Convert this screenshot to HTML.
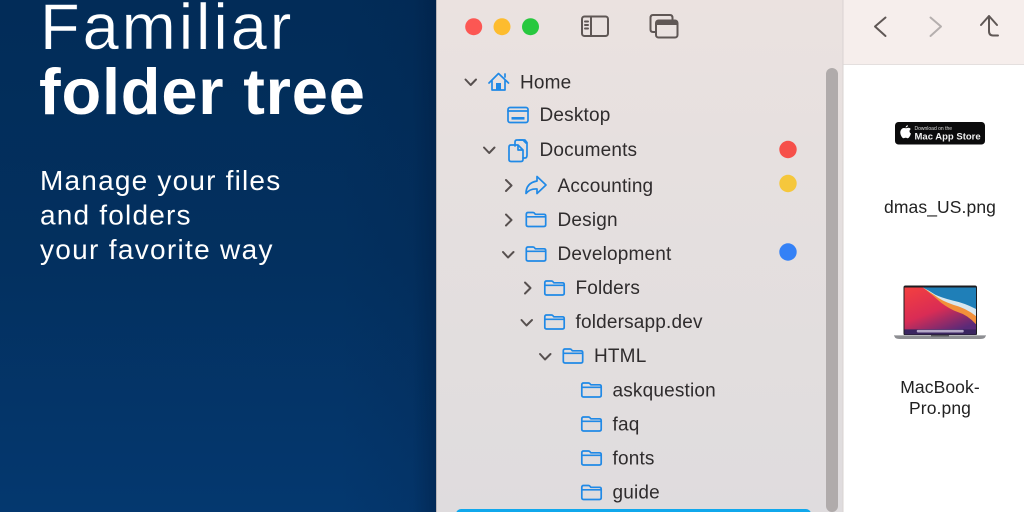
<!DOCTYPE html>
<html><head><meta charset="utf-8"><style>
html,body{margin:0;padding:0;width:1024px;height:512px;overflow:hidden;background:#fff}
svg{display:block}
text{font-family:"Liberation Sans",sans-serif}
.t{font-size:19px;fill:#2f2c2d;letter-spacing:.18px}
.ch{fill:none;stroke:#57504f;stroke-width:2;stroke-linecap:round;stroke-linejoin:round}
.ic{fill:none;stroke:#2089e6;stroke-width:1.7;stroke-linejoin:round;stroke-linecap:round}
.tb{fill:none;stroke:#5f5755;stroke-width:2;stroke-linejoin:round;stroke-linecap:round}
</style></head><body>
<svg width="1024" height="512" viewBox="0 0 1024 512" xmlns="http://www.w3.org/2000/svg">
<defs>
<linearGradient id="bg" x1="0" y1="0" x2="0" y2="1"><stop offset="0" stop-color="#022c58"/><stop offset=".5" stop-color="#03305f"/><stop offset="1" stop-color="#04386f"/></linearGradient>
<linearGradient id="shade" x1="0" y1="0" x2="1" y2="0"><stop offset="0" stop-color="#001c40" stop-opacity="0"/><stop offset=".75" stop-color="#001c40" stop-opacity=".12"/><stop offset="1" stop-color="#001c40" stop-opacity=".5"/></linearGradient>
<linearGradient id="side" x1="0" y1="0" x2="0" y2="1"><stop offset="0" stop-color="#ebe2e0"/><stop offset=".3" stop-color="#e6e0df"/><stop offset="1" stop-color="#dfdcde"/></linearGradient>
<linearGradient id="scr" x1="0" y1="0" x2=".6" y2="1"><stop offset="0" stop-color="#f4403f"/><stop offset=".55" stop-color="#d92c55"/><stop offset="1" stop-color="#5a2a78"/></linearGradient>
<symbol id="f" viewBox="0 0 21 16" overflow="visible"><path class="ic" d="M2.500 1H7.500Q8.600 1 9.200 2L9.800 2.800H18.500Q20.200 2.800 20.200 4.500V13.300Q20.200 15 18.500 15H2.500Q.8 15 .8 13.300V2.700Q.8 1 2.500 1ZM.8 5.300H20.200"/></symbol>
</defs>

<rect width="437" height="512" fill="url(#bg)"/>
<rect x="340" width="97" height="512" fill="url(#shade)"/>
<text x="40" y="49" font-size="65" letter-spacing="2.900" fill="#fff" stroke="#03305f" stroke-width=".5">Familiar</text>
<text x="39" y="114" font-size="65" font-weight="700" letter-spacing=".8" fill="#fff">folder tree</text>
<text x="40" y="190" font-size="28" letter-spacing="1.200" fill="#fff">Manage your files</text>
<text x="40" y="224.500" font-size="28" letter-spacing="1.200" fill="#fff">and folders</text>
<text x="40" y="259" font-size="28" letter-spacing="1.300" fill="#fff">your favorite way</text>

<rect x="436" width="408" height="512" fill="url(#side)"/>
<rect x="436" width="1" height="512" fill="#b9b6b8"/>
<rect x="843" width="181" height="64" fill="#f6eeec"/>
<rect x="843" y="64" width="181" height="1" fill="#e4dfde"/>
<rect x="843" y="65" width="181" height="447" fill="#fff"/>
<rect x="842.500" width="1" height="512" fill="#d9d3d2"/>

<circle cx="473.700" cy="26.700" r="8.500" fill="#fc5753"/>
<circle cx="502" cy="26.700" r="8.500" fill="#fdbc2e"/>
<circle cx="530.500" cy="26.700" r="8.500" fill="#28c83f"/>

<rect x="582" y="16.500" width="26" height="19.500" rx="2.500" class="tb"/>
<path class="tb" d="M591 16.500V36M585 21.500H588M585 25H588M585 28.500H588" stroke-width="1.600"/>
<path class="tb" d="M655 32H653Q650.500 32 650.500 29.500V18Q650.500 15 653 15H670Q672.500 15 672.500 18V20"/>
<rect x="656" y="20.500" width="21.500" height="17" rx="2.500" class="tb"/>
<rect x="656" y="20.500" width="21.500" height="4.500" fill="#5f5755"/>

<path class="tb" d="M885.500 17.500L875 26.500L885.500 36"/>
<path class="tb" d="M930.500 17.500L941 26.500L930.500 36" style="stroke:#b5afae"/>
<path class="tb" d="M981 25L989 16L997 25M989 16V31Q989 35.500 993 35.500H998"/>

<rect x="826" y="68" width="12" height="444" rx="6" fill="#b0abab"/>
<rect x="456" y="509" width="355" height="10" rx="5" fill="#10a8ec"/>

<circle cx="788" cy="149.500" r="8.700" fill="#f6504a"/>
<circle cx="788" cy="183.500" r="8.700" fill="#f5c73c"/>
<circle cx="788" cy="252" r="8.700" fill="#3481f6"/>

<path class="ch" d="M465.500 79.500L470.700 85L476 79.500"/>
<path class="ch" d="M484 147.500L489.200 153L494.500 147.500"/>
<path class="ch" d="M506 180L511.500 185.500L506 191"/>
<path class="ch" d="M506 214.500L511.500 220L506 225.500"/>
<path class="ch" d="M503 252L508 257.500L513.500 252"/>
<path class="ch" d="M525 282.500L530.500 288L525 293.500"/>
<path class="ch" d="M521.500 320L526.500 325.500L532 320"/>
<path class="ch" d="M540 354L545 359.500L550.500 354"/>

<path class="ic" d="M489 83L498.500 73.500L508.500 83M492 80.500V90H505V80.500"/>
<rect x="496" y="83" width="5" height="7" fill="#2089e6"/>
<path class="ic" d="M505 74V77"/>

<rect x="508" y="107.500" width="20" height="15" rx="2" class="ic"/>
<path class="ic" d="M508 111H528"/>
<rect x="511.500" y="117" width="13" height="2.600" fill="#2089e6"/>

<path class="ic" d="M515 146V142Q515 140 517 140H523L526 143"/>
<path class="ic" d="M519 140H525L527 142.500L527 155Q527 158 525 158H523"/>
<path class="ic" d="M511 145H518L523 150V159.500Q523 161.500 521 161.500H511Q509 161.500 509 159.500V147Q509 145 511 145ZM518 145V150H523"/>

<path class="ic" d="M526 193.500Q526 183 537 181V176.500L546 185L537 193.500V189Q530 188.500 526 193.500Z"/>

<use href="#f" x="525.500" y="211.500" width="21" height="16"/>
<use href="#f" x="525.500" y="246" width="21" height="16"/>
<use href="#f" x="544" y="280" width="21" height="16"/>
<use href="#f" x="544" y="314" width="21" height="16"/>
<use href="#f" x="562.500" y="348" width="21" height="16"/>
<use href="#f" x="581" y="382" width="21" height="16"/>
<use href="#f" x="581" y="416" width="21" height="16"/>
<use href="#f" x="581" y="450" width="21" height="16"/>
<use href="#f" x="581" y="484.500" width="21" height="16"/>

<text class="t" x="520" y="88.500">Home</text>
<text class="t" x="539.500" y="121">Desktop</text>
<text class="t" x="539.500" y="156">Documents</text>
<text class="t" x="557.500" y="192">Accounting</text>
<text class="t" x="557.500" y="226">Design</text>
<text class="t" x="557.500" y="260">Development</text>
<text class="t" x="575.500" y="294">Folders</text>
<text class="t" x="575.500" y="328">foldersapp.dev</text>
<text class="t" x="594" y="362">HTML</text>
<text class="t" x="612.500" y="396.500">askquestion</text>
<text class="t" x="612.500" y="430.500">faq</text>
<text class="t" x="612.500" y="464.500">fonts</text>
<text class="t" x="612.500" y="498.500">guide</text>

<rect x="895" y="122" width="90" height="22.500" rx="3.500" fill="#0b0b0c"/>
<path fill="#fff" d="M905.500 127.500Q906 125.500 908 125.300Q908 127.300 905.500 127.500ZM906 128.200C907 128.200 907.500 127.700 908.500 127.700Q910 127.700 910.800 129Q909.300 130 909.500 131.500Q909.700 133 911 133.500Q910.200 136 909 137.500Q908.300 138.300 907.500 138.200C906.700 138 906.300 137.700 905.500 137.700C904.700 137.700 904.200 138.200 903.500 138.200Q902.500 138.200 901.500 136.500C900 134 900 131.500 901 130Q902 128 904 128C904.800 128 905.400 128.200 906 128.200Z"/>
<text x="914.500" y="130" font-size="5" fill="#ddd">Download on the</text>
<text x="914.500" y="139.500" font-size="9.500" font-weight="700" fill="#f2f2f2">Mac App Store</text>

<text x="940" y="213" font-size="17.500" letter-spacing=".1" fill="#222" text-anchor="middle">dmas_US.png</text>

<rect x="903.500" y="285.500" width="73.500" height="50" rx="2" fill="#1c1c20"/>
<svg x="904.500" y="287.500" width="71.500" height="47" viewBox="0 0 70 46">
<rect width="70" height="46" fill="url(#scr)"/>
<path d="M18 0H70V36Q62 27 52 24Q44 21 36 15Q27 7 18 0Z" fill="#f2903a"/>
<path d="M18 0H70V28Q60 20 48 17Q36 13 30 8Q24 4 18 0Z" fill="#d8e6ee"/>
<path d="M18 0H70V21Q58 15 48 13Q36 10 30 7Q24 3 18 0Z" fill="#1f7fb8"/>
<rect x="0" y="41" width="70" height="5" fill="#3a2560"/>
<rect x="12" y="41.500" width="46" height="2.500" rx="1" fill="#b5a9c8"/>
</svg>
<path d="M894 335.500H986L985 337.500Q984 339 980 339H900Q896 339 895 337.500Z" fill="#8d8e92"/>
<rect x="894" y="335" width="92" height="1" fill="#b6b7ba"/>
<rect x="931" y="335" width="18" height="1.500" fill="#55565a"/>

<text x="940" y="393" font-size="17.500" letter-spacing=".1" fill="#222" text-anchor="middle">MacBook-</text>
<text x="940" y="414" font-size="17.500" letter-spacing=".1" fill="#222" text-anchor="middle">Pro.png</text>
</svg>
</body></html>
